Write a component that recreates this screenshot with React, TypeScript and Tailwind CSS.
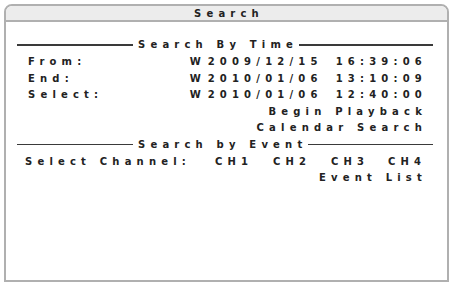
import React from 'react';

const font = { fontFamily: '"DejaVu Sans", Verdana, sans-serif' };

const Header: React.FC<{ label: string }> = ({ label }) => (
  <div className="flex h-[16.6px] items-center">
    <div className="h-[1.5px] w-[116px] bg-[#3a3a3a]" />
    <span className="pl-[5px] pr-[1px] tracking-[5.2px]">{label}</span>
    <div className="h-[1.5px] flex-1 bg-[#3a3a3a]" />
  </div>
);

const TimeRow: React.FC<{ label: string; date: string; time: string }> = ({ label, date, time }) => (
  <div className="flex h-[16.6px] items-center pl-[11px] pr-[6px] tracking-[5.2px]">
    <span className="flex-1">{label}</span>
    <span className="w-[18px]">W</span>
    <span className="w-[128px]">{date}</span>
    <span>{time}</span>
  </div>
);

const App: React.FC = () => {
  return (
    <div className="h-[284px] w-[454px] bg-white p-[4px] pb-[2px] pr-[5px]" style={font}>
      <div className="flex h-full flex-col overflow-hidden rounded-t-[8px] border-2 border-[#b0b0b0] bg-white text-[10px] font-bold text-[#222]">
        <div className="flex h-[16px] items-center justify-center border-b-2 border-[#b0b0b0] bg-[#ececec] pl-[5px] tracking-[5.2px]">
          Search
        </div>
        <div className="pl-[11px] pr-[14px] pt-[14.7px]">
          <Header label="Search By Time" />
          <TimeRow label="From:" date="2009/12/15" time="16:39:06" />
          <TimeRow label="End:" date="2010/01/06" time="13:10:09" />
          <TimeRow label="Select:" date="2010/01/06" time="12:40:00" />
          <div className="flex h-[16.6px] items-center justify-end pr-[6px] tracking-[5.2px]">Begin Playback</div>
          <div className="flex h-[16.6px] items-center justify-end pr-[6px] tracking-[5.2px]">Calendar Search</div>
          <Header label="Search by Event" />
          <div className="flex h-[16.6px] items-center pl-[8px] tracking-[5.2px]">
            <span className="w-[190px]">Select Channel:</span>
            <span className="w-[58px]">CH1</span>
            <span className="w-[58px]">CH2</span>
            <span className="w-[57px]">CH3</span>
            <span>CH4</span>
          </div>
          <div className="flex h-[16.6px] items-center justify-end pr-[6px] tracking-[5.2px]">Event List</div>
        </div>
      </div>
    </div>
  );
};

export default App;
